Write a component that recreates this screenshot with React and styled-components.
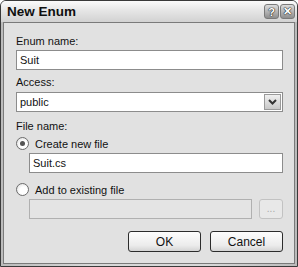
import React from "react";
import styled, { createGlobalStyle } from "styled-components";

const Global = createGlobalStyle`
  html, body { margin: 0; padding: 0; background: #fff; }
  * { box-sizing: border-box; }
`;

const Window = styled.div`
  width: 298px;
  height: 267px;
  display: flex;
  flex-direction: column;
  border: 1px solid #3a3a3a;
  border-radius: 6px 6px 0 0;
  background: #d4d4d4;
  font-family: "Liberation Sans", Arial, sans-serif;
  font-size: 11px;
  color: #111;
  overflow: hidden;
`;

const TitleBar = styled.div`
  height: 21px;
  display: flex;
  align-items: center;
  padding: 0 2px 0 6px;
  background: linear-gradient(#fbfbfb, #e6e6e6 45%, #d2d2d2);
`;

const Title = styled.div`
  flex: 1;
  font-weight: 700;
  font-size: 13.5px;
  color: #101010;
`;

const CaptionButton = styled.div`
  width: 15px;
  height: 15px;
  margin-left: 1px;
  border: 1px solid #7a7a7a;
  border-radius: 3px;
  background: linear-gradient(#dcdcdc, #8e8e8e);
  display: flex;
  align-items: center;
  justify-content: center;
  color: #fff;
  font-weight: 700;
  font-size: 11px;
  text-shadow: 0 0 1px #222, 0 0 1px #222, 0 0 1px #222;
`;

const Frame = styled.div`
  flex: 1;
  display: flex;
  padding: 0 2px 2px 2px;
  background: linear-gradient(90deg, #bbb, #d8d8d8 30%, #d8d8d8 70%, #bbb);
`;

const Body = styled.div`
  flex: 1;
  display: flex;
  flex-direction: column;
  border: 1px solid #7a7a7a;
  background: #e1e1e1;
  padding: 11px 11px 0 12px;
`;

const Label = styled.div`
  height: 15px;
  line-height: 15px;
  margin-bottom: ${({ $gap }) => $gap}px;
`;

const TextBox = styled.div`
  height: 20px;
  margin-left: ${({ $indent }) => ($indent ? "13px" : "0")};
  border: 1px solid ${({ $disabled }) => ($disabled ? "#b0b0b0" : "#8c8c8c")};
  background: ${({ $disabled }) => ($disabled ? "#e4e4e4" : "#fff")};
  padding: 0 3px;
  display: flex;
  align-items: center;
  justify-content: space-between;
  margin-bottom: ${({ $gap }) => $gap || 0}px;
`;

const DisabledBox = styled(TextBox)`
  flex: 1;
`;

const DropButton = styled.div`
  width: 17px;
  height: 16px;
  margin-right: -2px;
  border: 1px solid #9a9a9a;
  background: linear-gradient(#f0f0f0, #c8c8c8);
  display: flex;
  align-items: center;
  justify-content: center;
`;

const RadioRow = styled.div`
  display: flex;
  align-items: center;
  height: 15px;
  margin-bottom: ${({ $gap }) => $gap}px;
`;

const RadioCircle = styled.span`
  width: 13px;
  height: 13px;
  border-radius: 50%;
  border: 1px solid #6c6c6c;
  background: radial-gradient(circle at 60% 60%, #fff 40%, #d6d6d6);
  margin-right: 6px;
  display: flex;
  align-items: center;
  justify-content: center;
  &::after {
    content: "";
    width: 5px;
    height: 5px;
    border-radius: 50%;
    background: ${({ $checked }) => ($checked ? "#555" : "transparent")};
  }
`;

const BrowseRow = styled.div`
  display: flex;
  align-items: center;
  margin-left: 13px;
  gap: 7px;
  margin-bottom: 12px;
`;

const Browse = styled.div`
  width: 24px;
  height: 20px;
  border: 1px solid #c2c2c2;
  border-radius: 3px;
  background: #e8e8e8;
  color: #a8a8a8;
  display: flex;
  align-items: flex-end;
  justify-content: center;
  padding-bottom: 4px;
  font-size: 10px;
`;

const ButtonRow = styled.div`
  display: flex;
  justify-content: flex-end;
  gap: 9px;
`;

const Button = styled.div`
  width: 73px;
  height: 21px;
  border: 1px solid #2c2c2c;
  border-radius: 3px;
  background: linear-gradient(#fdfdfd, #ececec 70%, #d4d4d4);
  display: flex;
  align-items: center;
  justify-content: center;
  font-size: 12px;
`;

export default function App() {
  return (
    <>
      <Global />
      <Window>
        <TitleBar>
          <Title>New Enum</Title>
          <CaptionButton>?</CaptionButton>
          <CaptionButton>✕</CaptionButton>
        </TitleBar>
        <Frame>
          <Body>
            <Label $gap={1}>Enum name:</Label>
            <TextBox $gap={5}>Suit</TextBox>
            <Label $gap={2}>Access:</Label>
            <TextBox $gap={7}>
              public
              <DropButton>
                <svg width="9" height="6" viewBox="0 0 9 6">
                  <path d="M1 1 L4.5 4.5 L8 1" stroke="#333" strokeWidth="2" fill="none" />
                </svg>
              </DropButton>
            </TextBox>
            <Label $gap={2}>File name:</Label>
            <RadioRow $gap={2}>
              <RadioCircle $checked />
              Create new file
            </RadioRow>
            <TextBox $indent $gap={9}>Suit.cs</TextBox>
            <RadioRow $gap={2}>
              <RadioCircle />
              Add to existing file
            </RadioRow>
            <BrowseRow>
              <DisabledBox $disabled />
              <Browse>...</Browse>
            </BrowseRow>
            <ButtonRow>
              <Button>OK</Button>
              <Button>Cancel</Button>
            </ButtonRow>
          </Body>
        </Frame>
      </Window>
    </>
  );
}
